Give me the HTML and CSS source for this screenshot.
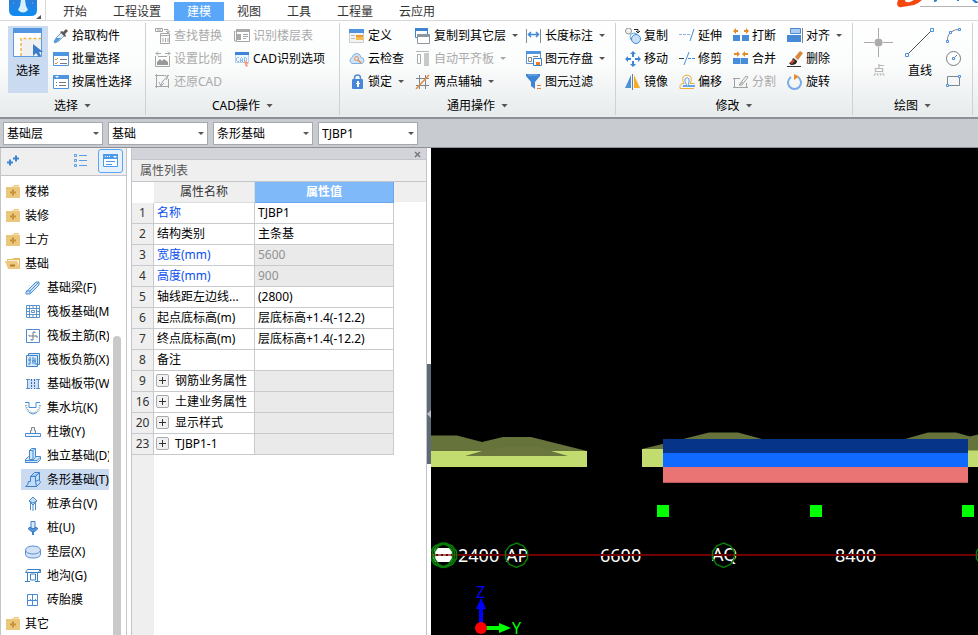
FILE: index.html
```html
<!DOCTYPE html>
<html lang="zh-CN">
<head>
<meta charset="utf-8">
<title>建模</title>
<meta name="viewport" content="width=device-width, initial-scale=1">
<link rel="stylesheet" href="styles.css">
</head>
<body>
<header class="topbar">
  <button class="app-logo" aria-label="应用菜单">
    <svg width="37" height="20" viewBox="0 0 37 20">
      <defs><linearGradient id="lg" x1="0" y1="0" x2="0" y2="1"><stop offset="0" stop-color="#2a7fdc"/><stop offset="1" stop-color="#0f8cf0"/></linearGradient></defs>
      <path d="M1 0H29V10Q29 16 23 16H7Q1 16 1 10Z" fill="url(#lg)"/>
      <path d="M13 0h4l1 6 2 4q-5 5-10 0l2-4Z" fill="#d5f1ff"/>
      <path d="M5 3h1M24 3h1" stroke="#6bc4fb" fill="none"/>
      <path d="M33 15v4h-5Z" fill="#555"/>
    </svg>
  </button>
  <nav class="tabs">
    <a href="#">开始</a><a href="#">工程设置</a><a href="#" class="active" aria-current="page">建模</a><a href="#">视图</a><a href="#">工具</a><a href="#">工程量</a><a href="#">云应用</a>
  </nav>
  <svg class="ime" width="82" height="8" viewBox="0 0 82 8">
    <path d="M24 6.500H82" stroke="#b5b5b5"/>
    <path d="M2 0H9Q9 3 14 2L18 0H26Q23 3 18 5L6 7Q2 8 1 4Z" fill="#f4480f"/>
    <path d="M38 0h3v1l-2 1h-1ZM61 0h2v1h-2ZM76 0h3l3 2v1h-3Z" fill="#2c7fd0"/>
  </svg>
</header>

<section class="ribbon" aria-label="建模工具">
  <div class="group g-select">
    <div class="group-body">
      <button class="big selected">
        <svg width="30" height="30" viewBox="0 0 30 30"><path d="M.5 .5h28v28H.5Z" fill="#fff" stroke="#5b9bdf"/><path d="M0 0h29v5H0Z" fill="#5596e0"/><path d="M8 11h20v17H8Z" fill="#f0f0f0"/><path d="M8 28V10.500h20" fill="none" stroke="#f5b33b" stroke-width="1.500" stroke-dasharray="3 2"/><path d="M20 16v12l3-3 3 4 2-1-2-4h4Z" fill="#3c7bc8"/></svg>
        <span>选择</span>
      </button>
      <div class="commands">
        <button class="cmd"><svg class="icon" viewBox="0 0 16 16"><path d="M3 10l6-6 3 3-6 6-4 2-1-1Z" fill="#dcecf8" stroke="#8aa2b8"/><path d="M3 10h5l-3 3-3 2-1-1Z" fill="#4d98e0"/><path d="M7 4l2-1 1 1 3-3 2 2-3 3 1 2-1 1Z" fill="#585858"/></svg><span>拾取构件</span></button>
        <button class="cmd"><svg class="icon" viewBox="0 0 16 16"><path d="M.5 2.500h15v12H.5Z" fill="#fff" stroke="#4f94df"/><path d="M0 1h16v4H0Z" fill="#4f94df"/><path d="M2 8l1 1 2-2M2 12l1 1 2-2" stroke="#e48b2a" fill="none"/><path d="M7 8.500h7M7 12.500h7" stroke="#777"/></svg><span>批量选择</span></button>
        <button class="cmd"><svg class="icon" viewBox="0 0 16 16"><path d="M.5 1.500h15v13H.5Z" fill="#fff" stroke="#4f94df"/><path d="M0 1h16v4H0Z" fill="#4f94df"/><path d="M2 2h4l-2 2Z" fill="#fff"/><path d="M3 8.500h1M6 8.500h7M3 11.500h1M6 11.500h7" stroke="#777"/></svg><span>按属性选择</span></button>
      </div>
    </div>
    <button class="group-label">选择<i class="caret"></i></button>
  </div>

  <div class="group g-cad">
    <div class="group-body commands">
      <button class="cmd" disabled><svg class="icon" viewBox="0 0 16 16" fill="none" stroke="#a5a5a5"><path d="M.5 .5h7v3h-7ZM3 1v2M5 1v2M9 1.500h4v3M11 3l2 2 2-2M5.500 5.500h9v10h-9ZM5 7.500h10M8 10v4M10.500 10v4M13 10v4"/></svg><span>查找替换</span></button>
      <button class="cmd" disabled><svg class="icon" viewBox="0 0 16 16" fill="none" stroke="#a5a5a5"><path d="M.5 3.500h1M.5 3v10h2M2.500 1.500h13v12h-13Z"/><path d="M2 1h14v3H2ZM3 6h4v6H3Z" fill="#aaa" stroke="none"/><path d="M9 6.500h5M9 8.500h5M9 10.500h3"/></svg><span>识别楼层表</span></button>
      <button class="cmd" disabled><svg class="icon" viewBox="0 0 16 16"><path d="M1 2.500h5M3 .5l-2 2 2 2M15 2.500h-5M13 .5l2 2-2 2M.5 5v10.500h14V5M3 5.500h9" fill="none" stroke="#a5a5a5"/><path d="M2 14v-3l3-3 2 2 2-2 4 3v3Z" fill="#999"/></svg><span>设置比例</span></button>
      <button class="cmd"><svg class="icon" viewBox="0 0 16 16"><path d="M1.500 2.500h13v9h-13Z" fill="#edf5fd" stroke="#b5d1ee"/><path d="M1 1h14v3H1Z" fill="#3d85d6"/><path d="M5 6.500H3.500l-1 1v2l1 1H5M6.500 11V7.500l1-1 1 1V11M7 9.500h1M10.500 6.500v4h1l1-1v-2l-1-1Z" fill="none" stroke="#8abbea"/><path d="M10 9l5 3-2 1 1 2-2 1-1-3Z" fill="#f49a7c"/></svg><span>CAD识别选项</span></button>
      <button class="cmd" disabled><svg class="icon" viewBox="0 0 16 16" fill="none" stroke="#a5a5a5"><path d="M1.500 0v14M0 1.500h10M0 12.500h14M13.500 5v9M12 1.500h2M6 12q0-2 2-5 2-3 5-4M10 1.500l3 1.500-2 3M4 8l2 4 3-3"/></svg><span>还原CAD</span></button>
    </div>
    <button class="group-label">CAD操作<i class="caret"></i></button>
  </div>

  <div class="group g-common">
    <div class="group-body commands">
      <button class="cmd"><svg class="icon" viewBox="0 0 16 16"><path d="M.5 1.500h14v13H.5Z" fill="#f3f3f3" stroke="#ccc"/><path d="M0 1h15v4H0Z" fill="#4f94df"/><path d="M2 7h4v1H2ZM2 10h4v1H2Z" fill="#bbb"/><path d="M7 7h7v5H7Z" fill="#f9bd4c"/><path d="M7 7h7v2H7Z" fill="#ed9730"/></svg><span>定义</span></button>
      <button class="cmd"><svg class="icon" viewBox="0 0 16 16"><path d="M.5 .5h12v9H.5Z" fill="#fff" stroke="#3e82d0"/><path d="M0 0h13v3H0Z" fill="#3e82d0"/><path d="M2.500 6.500h12v9h-12Z" fill="#fff" stroke="#8b969e"/><path d="M2 6h13v3H2Z" fill="#8b969e"/></svg><span>复制到其它层</span><i class="caret"></i></button>
      <button class="cmd"><svg class="icon" viewBox="0 0 16 16" fill="none"><path d="M.5 1v14M14.500 1v14" stroke="#7e8d96"/><path d="M3 6.500h9M5 4L2.500 6.500 5 9M10 4l2.500 2.500L10 9" stroke="#3d86d8" stroke-width="1.500"/></svg><span>长度标注</span><i class="caret"></i></button>
      <button class="cmd"><svg class="icon" viewBox="0 0 16 16"><path d="M3 12.500h10q2-1 2-3 0-3-3-3-1-4-4-4-4 0-5 4-2 1-2 3t2 3Z" fill="#cfe3f7" stroke="#7fb0e3"/><circle cx="7.500" cy="7.500" r="2" fill="none" stroke="#e88c50"/><path d="M9 9l3 3" stroke="#e88c50" stroke-width="1.500"/></svg><span>云检查</span></button>
      <button class="cmd" disabled><svg class="icon" viewBox="0 0 16 16"><path d="M1 .5h13" stroke="#b5b5b5"/><path d="M2.500 3.500h3v9h-3Z" fill="#fff" stroke="#aaa"/><path d="M9 2h5v13H9Z" fill="#c8c8c8"/></svg><span>自动平齐板</span><i class="caret"></i></button>
      <button class="cmd"><svg class="icon" viewBox="0 0 16 16"><path d="M.5 1.500h14v11H.5Z" fill="#fff" stroke="#5894d6"/><path d="M0 0h15v3H0Z" fill="#4f94df"/><path d="M2.500 6.500h3v4h-3ZM7 5.500h5" fill="none" stroke="#888"/><path d="M7.500 7.500h8v7h-8Z" fill="#fff" stroke="#3a7fd0"/><path d="M10 11h4v3h-4Z" fill="#ef7a2c"/></svg><span>图元存盘</span><i class="caret"></i></button>
      <button class="cmd"><svg class="icon" viewBox="0 0 16 16"><path d="M5.500 6V4q0-3 3-3t3 3v2" fill="none" stroke="#4f8fd8" stroke-width="1.500"/><rect x="3" y="5" width="11" height="10" rx="1" fill="#4687d7"/><path d="M8 7h2v2h1v1h-1v3H8v-3H7V9h1Z" fill="#fff"/></svg><span>锁定</span><i class="caret"></i></button>
      <button class="cmd"><svg class="icon" viewBox="0 0 16 16" fill="none" stroke="#7d868c"><path d="M4.500 1v14M10.500 1v14M1 4.500h13M1 11.500h13"/><path d="M1 15L14 1" stroke="#e58b42" stroke-width="1.500"/></svg><span>两点辅轴</span><i class="caret"></i></button>
      <button class="cmd"><svg class="icon" viewBox="0 0 16 16"><path d="M0 0h14v2L9 8v7l-4-3V8L0 2Z" fill="#3d84d3"/><path d="M2 1h10" stroke="#7eb3ed"/><path d="M11 11.500h4M11 14.500h4" stroke="#ee7b32"/></svg><span>图元过滤</span></button>
    </div>
    <button class="group-label">通用操作<i class="caret"></i></button>
  </div>

  <div class="group g-modify">
    <div class="group-body commands">
      <button class="cmd"><svg class="icon" viewBox="0 0 16 16" fill="none"><circle cx="3.500" cy="3" r="3" stroke="#8d9094" fill="#f2f2f2"/><path d="M9 1.500h4v3M11 3l2 2 2-2" stroke="#222"/><circle cx="9" cy="9" r="4" stroke="#6aa8e4"/><circle cx="11" cy="11" r="4.500" stroke="#3e8bd8" fill="#c9dff5"/></svg><span>复制</span></button>
      <button class="cmd"><svg class="icon" viewBox="0 0 16 16" fill="none"><path d="M0 6.500h11" stroke="#8fb1dc" stroke-dasharray="3 1"/><path d="M15 1l-4 12" stroke="#438edb"/></svg><span>延伸</span></button>
      <button class="cmd"><svg class="icon" viewBox="0 0 16 16"><path d="M0 7h7v6H0ZM9 7h7v6H9Z" fill="#468cd9"/><path d="M0 3l3-3v2h2v2H3v2ZM16 3l-3-3v2h-2v2h2v2Z" fill="#e38b27"/></svg><span>打断</span></button>
      <button class="cmd"><svg class="icon" viewBox="0 0 16 16"><path d="M3.500 .5h10v5h-10Z" fill="#a9cbf0" stroke="#4a8bd4"/><path d="M0 7h14v7H0Z" fill="#468ad7"/><path d="M15.500 0v15" stroke="#7b8790"/></svg><span>对齐</span><i class="caret"></i></button>
      <button class="cmd"><svg class="icon" viewBox="0 0 16 16" fill="#3e86d2"><path d="M8 0l3 3H9v3H7V3H5ZM8 16l-3-3h2v-3h2v3h2ZM0 8l3-3v2h3v2H3v2ZM16 8l-3-3v2h-3v2h3v2Z"/></svg><span>移动</span></button>
      <button class="cmd"><svg class="icon" viewBox="0 0 16 16" fill="none"><path d="M0 7.500h5" stroke="#38434a"/><path d="M9 7.500h7" stroke="#3d88d3" stroke-dasharray="3 1"/><path d="M10 1L5 14" stroke="#438edb"/></svg><span>修剪</span></button>
      <button class="cmd"><svg class="icon" viewBox="0 0 16 16"><path d="M0 7h15v6H0Z" fill="#468cd9"/><path d="M7.500 7v6" stroke="#a9ccef"/><path d="M7 3L4 0v2H1v2h3v2ZM9 3l3-3v2h3v2h-3v2Z" fill="#e38b27"/></svg><span>合并</span></button>
      <button class="cmd"><svg class="icon" viewBox="0 0 16 16"><path d="M8 6l5-6 3 2-5 7Z" fill="#d9863e"/><path d="M7 6l4 3-1 2-4-3Z" fill="#ddd"/><path d="M6 7l4 3q0 4-6 4l-2-2q3-1 4-5Z" fill="#222"/><path d="M6 8l2 2-3 3-2-1Z" fill="#c34a2b"/><path d="M0 15.500h14" stroke="#333"/></svg><span>删除</span></button>
      <button class="cmd"><svg class="icon" viewBox="0 0 16 16"><path d="M6 1v13H0Z" fill="#4b91dc"/><path d="M9 1v13h6Z" fill="#f3ad27"/><path d="M7.500 0v16" stroke="#767e83"/></svg><span>镜像</span></button>
      <button class="cmd"><svg class="icon" viewBox="0 0 16 16" fill="none"><path d="M15 14.500H1q-1-4 2-5h2Q3 7 4 3q4-4 8 0 1 4-1 6.500h4.500" stroke="#eeaf33" fill="#f3f7fb"/><path d="M16 12.500H4v-1h4L6 8V5q2-3 4 0v3l-1 3.500h7" stroke="#64a2e4"/></svg><span>偏移</span></button>
      <button class="cmd" disabled><svg class="icon" viewBox="0 0 16 16" fill="none" stroke="#a0a0a0"><path d="M7 4.500H1.500v9h12V9M0 4.500h3M0 13.500h3M12 13.500h3"/><path d="M6 11l7-9 2 1-6 8ZM6 11l4-3"/></svg><span>分割</span></button>
      <button class="cmd"><svg class="icon" viewBox="0 0 16 16"><path d="M11 3A6.500 6.500 0 1 1 4 3" fill="none" stroke="#77ade6" stroke-width="2"/><path d="M7 0l5 2.500L7 6Z" fill="#f28927"/></svg><span>旋转</span></button>
    </div>
    <button class="group-label">修改<i class="caret"></i></button>
  </div>

  <div class="group g-draw">
    <div class="group-body">
      <button class="big" disabled><svg width="30" height="30" viewBox="0 0 30 30"><path d="M0 14.500h10M19 14.500h10M14.500 0v10M14.500 19v10" stroke="#a9a9a9"/><circle cx="14.500" cy="14.500" r="4" fill="#aaa"/></svg><span>点</span></button>
      <button class="big"><svg width="30" height="30" viewBox="0 0 30 30" fill="#fff"><path d="M2 27L26 3" stroke="#465158"/><path d="M.5 25.500h3v3h-3ZM25.500 .5h3v3h-3Z" stroke="#4a90df"/></svg><span>直线</span></button>
      <div class="shapes">
        <button aria-label="弧"><svg class="icon" viewBox="0 0 16 16" fill="#fff"><path d="M1.500 14Q1 7 5 4 9 1 14 1.500" fill="none" stroke="#7c868d"/><path d="M.5 12.500h2v2h-2ZM3.500 3.500h2v2h-2ZM12.500 .5h2v2h-2Z" stroke="#4a90df"/></svg></button>
        <button aria-label="圆"><svg class="icon" viewBox="0 0 16 16" fill="#fff"><circle cx="7.500" cy="7.500" r="7" stroke="#717b82"/><path d="M7 8l4-4" stroke="#717b82"/><path d="M6.500 6.500h2v2h-2Z" stroke="#4a90df"/></svg></button>
        <button aria-label="矩形"><svg class="icon" viewBox="0 0 16 16" fill="none"><path d="M1.500 2.500h12v9h-12Z" stroke="#7c868d"/><path d="M.5 10.500h2v2h-2ZM12.500 1.500h2v2h-2Z" fill="#fff" stroke="#4a90df"/></svg></button>
      </div>
    </div>
    <button class="group-label">绘图<i class="caret"></i></button>
  </div>
</section>

<section class="filters" aria-label="构件选择">
  <label class="picker"><select aria-label="楼层"><option>基础层</option></select><i class="caret"></i></label>
  <label class="picker"><select aria-label="类别"><option>基础</option></select><i class="caret"></i></label>
  <label class="picker"><select aria-label="构件类型"><option>条形基础</option></select><i class="caret"></i></label>
  <label class="picker"><select aria-label="构件"><option>TJBP1</option></select><i class="caret"></i></label>
</section>

<main class="workspace">
  <aside class="sidebar">
    <div class="side-tools">
      <button class="add" aria-label="添加"><svg width="14" height="14" viewBox="0 0 14 14"><path d="M0 8.500h6M3 5.500v6M6 4.500h6M9 1.500v6" stroke="#3d84d4" stroke-width="2"/></svg></button>
      <button aria-label="列表"><svg width="14" height="14" viewBox="0 0 14 14" fill="none" stroke="#569de6"><path d="M.5 .5h2v2h-2ZM.5 5.500h2v2h-2ZM.5 10.500h2v2h-2ZM5 1.500h8M5 6.500h8M5 11.500h8"/></svg></button>
      <button class="on" aria-label="分组"><svg width="15" height="14" viewBox="0 0 15 14"><path d="M.5 .5h14v12H.5Z" fill="#fff" stroke="#4d9ae8"/><path d="M0 0h15v5H0Z" fill="#4d9ae8"/><path d="M2 2.500h1M4 2.500h1M6 2.500h1" stroke="#fff"/><path d="M10 2h4l-2 2Z" fill="#fff"/><path d="M3 7.500h9M3 10.500h6" stroke="#4d9ae8"/></svg></button>
    </div>
    <div class="side-body">
      <ul class="tree">
        <li><svg class="icon" viewBox="0 0 16 16"><path d="M1 3h6l2-2h5v2h1v11H1Z" fill="#ebc67d"/><path d="M8 2.500h6" stroke="#f6e3bb"/><path d="M5 8.500h6M8 5.500v6" stroke="#c8913c" stroke-width="2"/></svg>楼梯</li>
        <li><svg class="icon" viewBox="0 0 16 16"><path d="M1 3h6l2-2h5v2h1v11H1Z" fill="#ebc67d"/><path d="M8 2.500h6" stroke="#f6e3bb"/><path d="M5 8.500h6M8 5.500v6" stroke="#c8913c" stroke-width="2"/></svg>装修</li>
        <li><svg class="icon" viewBox="0 0 16 16"><path d="M1 3h6l2-2h5v2h1v11H1Z" fill="#ebc67d"/><path d="M8 2.500h6" stroke="#f6e3bb"/><path d="M5 8.500h6M8 5.500v6" stroke="#c8913c" stroke-width="2"/></svg>土方</li>
        <li><svg class="icon" viewBox="0 0 16 16"><path d="M2 3h5l2-1h6v11H3Z" fill="#e6b963"/><path d="M3 4h11v8H3Z" fill="#fff3d7"/><path d="M0 5h12l3 8H3Z" fill="#edc883"/><path d="M5 9.500h5" stroke="#b67d2b" stroke-width="2"/></svg>基础
          <ul>
            <li><svg class="icon" viewBox="0 0 16 16"><path d="M1 12L11 2h3v3L5 14H1Z" fill="#cfe2f6" stroke="#4d90d6"/><path d="M1 11h4v3M5 11l9-9" fill="none" stroke="#4d90d6"/></svg>基础梁(F)</li>
            <li><svg class="icon" viewBox="0 0 16 16" fill="none" stroke="#5b93cd"><path d="M1.500 1.500h13v12h-13ZM4.500 1v13M11.500 1v13M1 4.500h14M1 10.500h14M6.500 6.500h3v2h-3ZM8 2v2M8 11v3M2 7.500h2M12 7.500h2"/></svg>筏板基础(M)</li>
            <li><svg class="icon" viewBox="0 0 16 16" fill="none" stroke="#4c8bcc"><path d="M1.500 1.500h13v13h-13Z" fill="#fff"/><path d="M8 4v8M4 8h8M8 4h2v1M8 12H6v-1M4 8V7M12 8v2" stroke="#6d7b86"/></svg>筏板主筋(R)</li>
            <li><svg class="icon" viewBox="0 0 16 16" fill="#d6e7f8" stroke="#3f83c9"><path d="M3.500 1.500h11v11h-11Z"/><path d="M1.500 3.500h11v11h-11Z"/><path d="M3 8h3M5 5v7H3M7 9h4M8 5v7M10 6v6h2"/></svg>筏板负筋(X)</li>
            <li><svg class="icon" viewBox="0 0 16 16"><path d="M2 3h12v10H2Z" fill="#cfe1f6"/><path d="M1 3.500h4M11 3.500h4M1 12.500h4M11 12.500h4M2.500 3v10M13.500 3v10" stroke="#5d90c8"/><path d="M6.500 3v10M9.500 3v10" stroke="#2f70b8" stroke-dasharray="2 1"/></svg>基础板带(W)</li>
            <li><svg class="icon" viewBox="0 0 16 16" fill="none"><path d="M0 2.500h4v5h7v-5h4" stroke="#408ddb"/><path d="M1 5q1 8 7 8t7-8" stroke="#86a6a8" stroke-width="2" stroke-dasharray="1 1"/><path d="M4 12q4 4 8 0" stroke="#619ee0"/></svg>集水坑(K)</li>
            <li><svg class="icon" viewBox="0 0 16 16" fill="#edf5fd"><path d="M.5 9.500h15v3H.5Z" stroke="#4c8bcd"/><path d="M5.500 9V6.500h1v-3h3v3h1V9" stroke="#7b8790"/></svg>柱墩(Y)</li>
            <li><svg class="icon" viewBox="0 0 16 16" fill="#d5e6f8" stroke="#438bd5"><path d="M.5 11.500l3-3h12v3l-3 3H.5Z"/><path d="M4.500 11.500v-9l2-2h4v9l-2 2Z"/><path d="M4 2.500h4v9M1 12.500h11l3-3M8 2.500l2-2" fill="none"/></svg>独立基础(D)</li>
            <li class="selected"><svg class="icon" viewBox="0 0 16 16" fill="#c3dcf5" stroke="#3981cc"><path d="M.5 14.500q3-1 3-5h2v-5l4-4h5v8l1 2-4 4Z"/><path d="M5.500 4.500h5l4-4M10.500 4.500v5l1 5M10.500 9.500l4-2" fill="#8ebce9"/></svg>条形基础(T)</li>
            <li><svg class="icon" viewBox="0 0 16 16" fill="#c9e0f6" stroke="#4a8ac9"><path d="M8 1l4 4-4 4-4-4Z"/><path d="M5.500 7v7M10.500 7v7M8 9v6M4 5l4 2 4-2" fill="none"/></svg>桩承台(V)</li>
            <li><svg class="icon" viewBox="0 0 16 16" fill="#d8e9fa" stroke="#3f82cb"><path d="M6 1.500h4v7H6Z"/><path d="M3.500 8l2.500-1v2h4V7l2.500 1v1L10 11.500H6L3.500 9Z" fill="#5b98dc"/><path d="M8 11v4" stroke-width="2"/></svg>桩(U)</li>
            <li><svg class="icon" viewBox="0 0 16 16" fill="#d3e2f8" stroke="#5a91d4"><path d="M.5 6v4q0 4 7.500 4t7.500-4V6"/><ellipse cx="8" cy="6" rx="7.500" ry="4"/></svg>垫层(X)</li>
            <li><svg class="icon" viewBox="0 0 16 16" fill="none" stroke="#3e80c6"><path d="M.5 4.500l2-3h13v3ZM2.500 4v9M12.500 4v9M5.500 6h5v6h-5ZM0 13.500h5M10 13.500h5M15 2l-2 3"/></svg>地沟(G)</li>
            <li><svg class="icon" viewBox="0 0 16 16" fill="#fff" stroke="#4b8bd2"><path d="M2.500 2.500h10v11h-10ZM7.500 2v12M2 8.500h11M5.500 7v1M10.500 7v1"/></svg>砖胎膜</li>
          </ul>
        </li>
        <li><svg class="icon" viewBox="0 0 16 16"><path d="M1 3h6l2-2h5v2h1v11H1Z" fill="#ebc67d"/><path d="M8 2.500h6" stroke="#f6e3bb"/><path d="M5 8.500h6M8 5.500v6" stroke="#c8913c" stroke-width="2"/></svg>其它</li>
      </ul>
      <div class="scroll-track"><div class="scroll-thumb"></div></div>
    </div>
  </aside>

  <section class="properties" aria-label="属性列表">
    <div class="panel-grip"><button aria-label="关闭"><svg width="7" height="7" viewBox="0 0 7 7"><path d="M1 1l5 5M6 1L1 6" stroke="#777" stroke-width="1.500"/></svg></button></div>
    <h2>属性列表</h2>
    <div class="sheet">
      <table>
        <thead><tr><td class="corner"></td><th>属性名称</th><th class="current">属性值</th></tr></thead>
        <tbody>
          <tr><th>1</th><td class="key">名称</td><td>TJBP1</td></tr>
          <tr><th>2</th><td>结构类别</td><td>主条基</td></tr>
          <tr><th>3</th><td class="key">宽度(mm)</td><td class="locked">5600</td></tr>
          <tr><th>4</th><td class="key">高度(mm)</td><td class="locked">900</td></tr>
          <tr><th>5</th><td>轴线距左边线...</td><td>(2800)</td></tr>
          <tr><th>6</th><td>起点底标高(m)</td><td>层底标高+1.4(-12.2)</td></tr>
          <tr><th>7</th><td>终点底标高(m)</td><td>层底标高+1.4(-12.2)</td></tr>
          <tr><th>8</th><td>备注</td><td></td></tr>
          <tr><th>9</th><td class="fold"><button aria-label="展开"></button>钢筋业务属性</td><td class="locked"></td></tr>
          <tr><th>16</th><td class="fold"><button aria-label="展开"></button>土建业务属性</td><td class="locked"></td></tr>
          <tr><th>20</th><td class="fold"><button aria-label="展开"></button>显示样式</td><td class="locked"></td></tr>
          <tr><th>23</th><td class="fold"><button aria-label="展开"></button>TJBP1-1</td><td class="locked"></td></tr>
        </tbody>
      </table>
    </div>
  </section>

  <div class="splitter"><button aria-label="收起"><svg width="4" height="8" viewBox="0 0 4 8"><path d="M4 0v8L0 4Z" fill="#b9c1c6"/></svg></button></div>

  <div class="viewport">
    <svg viewBox="431 148 547 487" preserveAspectRatio="xMinYMin slice">
      <path d="M431 451h156v16H431ZM642 449h22v18h-22ZM967 450h40v17h-40Z" fill="#c2dc70"/>
      <path d="M431 435.500h26l25 6.500 21-5h28l56 14H431Z" fill="#66733b"/>
      <path d="M465 456l17-5 22-4h35l12 4 17 5Z" fill="#6a763d"/>
      <path d="M642 449l45-11 22-5.500h29l24 6.500h-98v10ZM905 439l23-6.500h28l14 4 8-2 30 5v11h-40v-11Z" fill="#66733b"/>
      <path d="M663 439h305v14H663Z" fill="#063489"/>
      <path d="M663 453h305v14H663Z" fill="#106aff"/>
      <path d="M663 467h305v16H663Z" fill="#ea7373"/>
      <path d="M663 482.500h305" stroke="#b95a5a"/>
      <path d="M657 505h12v12h-12ZM810 505h12v12h-12ZM962 505h12v12h-12Z" fill="#0f0"/>
      <g class="dims">
        <text x="458" y="562">2400</text><text x="506" y="562">AP</text><text x="600" y="562">6600</text><text x="712" y="561">AQ</text><text x="835" y="562">8400</text>
      </g>
      <path d="M434 549l2-1h14l2 2v4l1 5-2 3h-17l-1-3 1-4Z" fill="#fff"/>
      <path d="M431 555h547" stroke="#710000" stroke-width="2"/>
      <path d="M433 555h19" stroke="#e9c4c4" stroke-dasharray="3 2"/>
      <g fill="none" stroke="#087b08" stroke-width="1.500">
        <path id="mark" d="M516.500 543l7 3 4 5.500v7l-4 6-7 3-7-3-4-6v-7l4-5.500Z"/>
        <use href="#mark" x="-75"/><use href="#mark" x="-73"/><use href="#mark" x="-71"/><use href="#mark" x="207"/><use href="#mark" x="471"/>
      </g>
      <path d="M479 624v-15h-3l5-11 5 11h-3v15Z" fill="#00f"/>
      <path d="M485 626h14v-3l12 5-12 5v-3h-14Z" fill="#0f0"/>
      <circle cx="481" cy="628" r="6" fill="#f00"/>
      <g class="axis"><text x="476" y="598" fill="#00f">Z</text><text x="512" y="634" fill="#0f0">Y</text></g>
    </svg>
  </div>
</main>
</body>
</html>
```
FILE: styles.css
```css
* { box-sizing: border-box; }

body {
  margin: 0;
  min-height: 100vh;
  display: flex;
  flex-direction: column;
  overflow: hidden;
  background: #fff;
  color: #000;
  font: 12px/18px "Noto Sans", "Noto Sans CJK SC", sans-serif;
}

button, select {
  margin: 0;
  padding: 0;
  border: 0;
  background: none;
  color: inherit;
  font: inherit;
}

button:disabled { color: #aaa; }
svg { display: block; flex: none; }
.icon { width: 16px; height: 16px; }
ul { list-style: none; margin: 0; padding: 0; }

.caret {
  width: 7px;
  height: 4px;
  margin-left: 3px;
  background: #555;
  clip-path: polygon(0 0, 100% 0, 50% 100%);
}

/* Title bar */
.topbar {
  display: flex;
  height: 21px;
  border-bottom: 1px solid #d8d8d8;
}

.app-logo {
  width: 46px;
  padding-left: 8px;
  border-right: 1px solid #d8d8d8;
}

.tabs { display: flex; padding: 2px 0 0 4px; margin-bottom: -1px; }
.tabs a { padding: 0 13px; line-height: 19px; color: #333; text-decoration: none; }
.tabs a.active { background: #5aa6f8; color: #fff; }
.ime { margin-left: auto; }

/* Ribbon */
.ribbon {
  display: flex;
  border-bottom: 2px solid #8d9197;
  background: linear-gradient(#fff 0%, #fbfcfc 45%, #e7ebec 100%);
  padding: 2px 0;
}

.group {
  display: flex;
  flex-direction: column;
  border-right: 1px solid #cfd2d4;
}

.group-body { padding: 1px 10px 0 9px; }
.g-select .group-body { display: flex; gap: 5px; padding: 1px 13px 0 8px; }
.g-cad .group-body { grid-template-columns: 79px auto; padding-right: 14px; }
.g-common .group-body { grid-template-columns: 66px 111px auto; }
.g-modify .group-body { grid-template-columns: 54px 54px 54px auto; }
.g-draw .group-body { display: flex; gap: 11px; padding-left: 11px; }

.commands { display: grid; grid-auto-rows: 23px; }

.cmd {
  display: flex;
  align-items: center;
  gap: 3px;
  white-space: nowrap;
}

.cmd .caret { width: 6px; height: 3px; }
.cmd:disabled .caret { background: #aaa; }

.big {
  display: flex;
  flex-direction: column;
  align-items: center;
  gap: 4px;
  width: 30px;
  padding-top: 4px;
}

.big.selected { width: 40px; margin-top: 2px; padding-top: 2px; background: #c9daf1; }
.shapes { display: grid; grid-auto-rows: 23px; align-items: center; }

.group-label {
  display: flex;
  align-items: center;
  justify-content: center;
  gap: 3px;
  margin-top: 3px;
  height: 19px;
}

/* Component pickers */
.filters {
  display: flex;
  gap: 5px;
  padding: 3px 3px 2px;
  background: #c8cbd0;
  border-bottom: 1px solid #8d9197;
}

.picker { position: relative; width: 100px; }

.picker select {
  display: block;
  appearance: none;
  width: 100%;
  height: 23px;
  padding: 0 16px 0 3px;
  border: 1px solid #a6a8ac;
  border-radius: 0;
  background: #fff;
}

.picker .caret { position: absolute; right: 4px; top: 10px; width: 6px; height: 3px; }

/* Workspace */
.workspace { display: flex; flex: 1 1 0; min-height: 0; overflow: hidden; }

.sidebar {
  display: flex;
  flex-direction: column;
  width: 127px;
  border: 1px solid #c3c5ca;
  border-width: 0 1px;
}

.side-tools {
  display: flex;
  align-items: center;
  height: 28px;
  padding: 0 3px 2px 6px;
  gap: 10px;
  background: #efefef;
  border-bottom: 1px solid #c3c5ca;
}

.side-tools .add { margin-right: auto; }

.side-tools .on {
  display: grid;
  place-items: center;
  width: 25px;
  height: 24px;
  border: 1px solid #5aa6f8;
  border-radius: 3px;
  background: #e6f1fd;
}

.side-body { display: flex; flex: 1; min-height: 0; padding-top: 4px; }
.tree { width: 108px; overflow: hidden; white-space: nowrap; line-height: 24px; }
.tree li { padding-left: 24px; }
.tree li .icon { float: left; margin: 4px 4px 0 -20px; }
.tree ul { clear: both; margin-left: -4px; }
.tree ul li { height: 24px; padding-left: 26px; }
.tree ul li .icon { margin: 4px 6px 0 -22px; }
.tree ul li.selected { background: linear-gradient(#c9daf1, #c9daf1) 0 1px / 100% 21px no-repeat; }

.scroll-track { flex: 1; padding: 156px 5px 0 4px; }
.scroll-thumb { height: 100%; border-radius: 4px 4px 0 0; background: #c9c9c9; }

/* Property list */
.properties {
  display: flex;
  flex-direction: column;
  width: 296px;
  margin-left: 4px;
  border: 1px solid #c3c5ca;
  border-width: 0 1px;
}

.panel-grip {
  display: flex;
  justify-content: flex-end;
  align-items: center;
  height: 12px;
  padding: 2px 5px 0 0;
  background: #d2d4d9;
  border-bottom: 1px solid #c3c5ca;
}

.properties h2 {
  margin: 0;
  padding: 1px 8px;
  height: 22px;
  font: inherit;
  line-height: 20px;
  color: #555;
  background: #efefef;
  border-bottom: 1px solid #c3c5ca;
}

.sheet {
  flex: 1;
  background:
    linear-gradient(#efefef, #efefef) 100% 0 / 33px 20px no-repeat,
    linear-gradient(#efefef, #efefef) 0 20px / 22px 100% no-repeat;
}

table { width: 262px; border-collapse: separate; border-spacing: 0; table-layout: fixed; }
th, td { height: 21px; padding: 0 0 0 3px; border: 1px solid #c8cacd; border-width: 0 1px 1px 0; line-height: 20px; text-align: left; white-space: nowrap; overflow: hidden; }
th { padding: 0; font-weight: normal; text-align: center; color: #333; background: #efefef; }
thead th, thead td { height: 20px; line-height: 20px; border-color: #ddd; }
thead .corner { width: 22px; border: 0; background: #fff; }
thead th { width: 101px; }
thead .current { width: 139px; border-color: #69a6ea; background: #80b9fa; color: #fff; font-weight: bold; }
.key { color: #0a50ef; }
tbody .locked { background: #eaeaea; color: #929292; }

.fold button {
  float: left;
  width: 13px;
  height: 13px;
  margin: 3px 6px 0 -1px;
  border: 1px solid #aaa;
  border-radius: 2px;
  background:
    linear-gradient(#333, #333) center / 7px 1px no-repeat,
    linear-gradient(#333, #333) center / 1px 7px no-repeat,
    #f1f1f1;
}

.splitter { width: 4px; padding-top: 216px; }
.splitter button { display: grid; place-items: center; width: 4px; height: 100px; background: #5e6a75; }

/* Model view */
.viewport { flex: 1; min-width: 0; background: #000; overflow: hidden; }
.viewport svg { width: 100%; height: 100%; }
.dims { fill: #fff; font-size: 18px; }
.axis { font-size: 16px; }
```
